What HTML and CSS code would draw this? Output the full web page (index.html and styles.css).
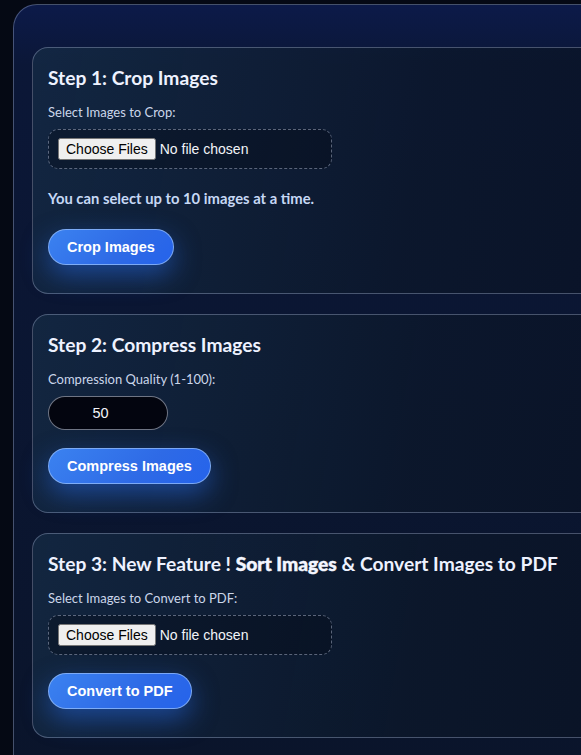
FILE: index.html
```html
<!DOCTYPE html>
<html lang="en">
<head>
<meta charset="utf-8">
<title>Image Tools</title>
<link rel="stylesheet" href="styles.css">
</head>
<body>
<main class="shell">
  <section class="card">
    <h3 class="card-title">Step 1: Crop Images</h3>
    <label class="field-label" for="crop-files">Select Images to Crop:</label>
    <input class="file-box" id="crop-files" type="file" multiple accept="image/*">
    <p class="hint">You can select up to 10 images at a time.</p>
    <button class="action" type="button">Crop Images</button>
  </section>

  <section class="card">
    <h3 class="card-title">Step 2: Compress Images</h3>
    <label class="field-label" for="quality">Compression Quality (1-100):</label>
    <input class="quality" id="quality" type="number" min="1" max="100" value="50">
    <button class="action action-spaced" type="button">Compress Images</button>
  </section>

  <section class="card">
    <h3 class="card-title">Step 3: New Feature ! <strong class="emph">Sort Images</strong> &amp; Convert Images to PDF</h3>
    <label class="field-label" for="pdf-files">Select Images to Convert to PDF:</label>
    <input class="file-box" id="pdf-files" type="file" multiple accept="image/*">
    <button class="action action-spaced" type="button">Convert to PDF</button>
  </section>
</main>
</body>
</html>
```

FILE: styles.css
```css
html, body {
  margin: 0;
  padding: 0;
  background: #050914;
  overflow: hidden;
  height: 100%;
}

body {
  padding: 4px 0 0 13px;
  font-family: Lato, "Noto Sans", sans-serif;
  color: #eef2ff;
}

.shell {
  width: 900px;
  min-height: 900px;
  box-sizing: border-box;
  padding: 42px 18px 40px 18px;
  border: 1px solid rgba(180, 195, 230, 0.35);
  border-radius: 24px;
  background: linear-gradient(180deg, #0c1a49 0px, #0b1737 60px, #0a1429 100%);
  display: flex;
  flex-direction: column;
  gap: 20px;
}

.card {
  border: 1px solid rgba(170, 185, 215, 0.38);
  border-radius: 16px;
  padding: 18px 15px 28px 15px;
  background: linear-gradient(100deg, rgba(22, 44, 70, 0.75) 0%, rgba(12, 24, 42, 0.7) 45%, rgba(6, 12, 28, 0.7) 100%);
  display: flex;
  flex-direction: column;
  align-items: flex-start;
}

.card-title {
  margin: 0 0 13px 0;
  font-size: 19.2px;
  line-height: 24px;
  font-weight: 700;
  color: #eef2ff;
}

.emph {
  font-weight: 900;
  color: #f4f6ff;
  -webkit-text-stroke: 0.45px #f4f6ff;
}

.field-label {
  display: block;
  font-size: 13px;
  line-height: 18px;
  color: #cbd6ea;
  margin-bottom: 8px;
}

.file-box {
  box-sizing: border-box;
  width: 284px;
  height: 40px;
  padding: 8px 9px;
  border: 1px dashed rgba(190, 200, 225, 0.45);
  border-radius: 10px;
  background: rgba(3, 8, 20, 0.35);
  color: #f2f4f8;
  font-family: "Liberation Sans", Arial, sans-serif;
  font-size: 14px;
}

.hint {
  margin: 20px 0 22px 0;
  font-size: 14.8px;
  line-height: 18px;
  font-weight: 700;
  color: #c6d8f5;
}

.quality {
  box-sizing: border-box;
  width: 120px;
  height: 34px;
  padding: 0 12px;
  border: 1px solid rgba(200, 210, 230, 0.55);
  border-radius: 17px;
  background: #03050f;
  color: #f2f4f8;
  font-family: "Liberation Sans", Arial, sans-serif;
  font-size: 14.5px;
  text-align: center;
}

.action {
  box-sizing: border-box;
  height: 36px;
  padding: 9px 18px;
  border: 1px solid rgba(150, 190, 250, 0.75);
  border-radius: 999px;
  background: linear-gradient(135deg, #3b82f0 0%, #2e6ae6 60%, #2563eb 100%);
  color: #ffffff;
  font-family: "Liberation Sans", Arial, sans-serif;
  font-size: 14.5px;
  line-height: 16px;
  font-weight: 700;
  box-shadow: 0 10px 26px rgba(40, 110, 240, 0.5);
  cursor: pointer;
}

.action-spaced {
  margin-top: 18px;
}
```
